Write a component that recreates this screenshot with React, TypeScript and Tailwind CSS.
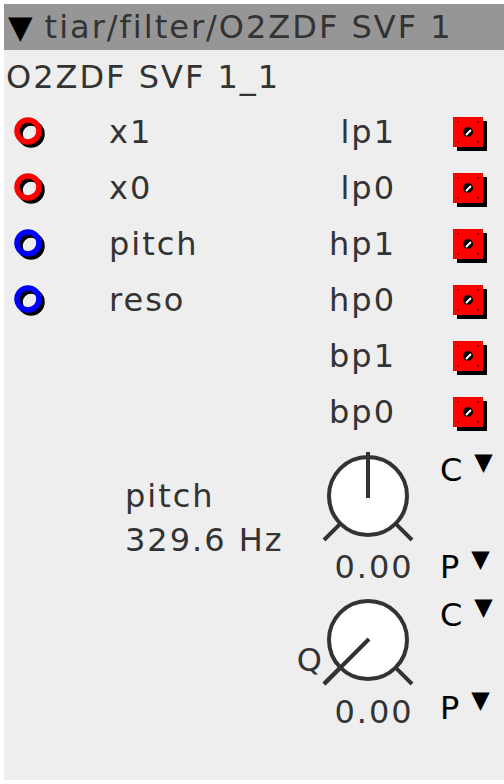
const inputs = [
  { name: 'x1', color: '#ff0000' },
  { name: 'x0', color: '#ff0000' },
  { name: 'pitch', color: '#0000ff' },
  { name: 'reso', color: '#0000ff' },
];

const outputs = ['lp1', 'lp0', 'hp1', 'hp0', 'bp1', 'bp0'];

function InPort({ color }: { color: string }) {
  return (
    <svg width="105" height="56" className="shrink-0">
      <circle cx="27" cy="30" r="11" fill="none" stroke="#000" strokeWidth="5.5" />
      <circle cx="24" cy="27" r="11" fill="none" stroke={color} strokeWidth="5.5" />
    </svg>
  );
}

function OutPort() {
  return (
    <svg width="108" height="56" className="shrink-0">
      <rect x="61" y="17" width="30" height="30" fill="#000" />
      <rect x="57" y="13" width="30" height="30" fill="#ff0000" />
      <rect x="61" y="17" width="1.5" height="1.5" fill="#000" />
      <rect x="81" y="17" width="1.5" height="1.5" fill="#000" />
      <rect x="61" y="37" width="1.5" height="1.5" fill="#000" />
      <rect x="81" y="37" width="1.5" height="1.5" fill="#000" />
      <circle cx="72" cy="28" r="5" fill="#000" />
      <path d="M70 31 L75 26" stroke="#fff" strokeWidth="2" />
    </svg>
  );
}

function Knob({ angle }: { angle: 'up' | 'min' }) {
  return (
    <svg width="100" height="100" className="block">
      <circle cx="50" cy="50" r="39" fill="#fff" stroke="#333" strokeWidth="4" />
      <path d="M22.4 77.6 L6 94" stroke="#333" strokeWidth="4" />
      <path d="M77.6 77.6 L94 94" stroke="#333" strokeWidth="4" />
      {angle === 'up' ? (
        <path d="M50 6 L50 52" stroke="#333" strokeWidth="4" />
      ) : (
        <path d="M51 49 L6 94" stroke="#333" strokeWidth="4" />
      )}
    </svg>
  );
}

function Drop({ letter }: { letter: string }) {
  return (
    <div className="flex items-center text-black">
      <span>{letter}</span>
      <span className="ml-[10px] text-[24px] leading-none -mt-[16px]">▼</span>
    </div>
  );
}

export default function App() {
  return (
    <div className="min-h-screen bg-white pl-1 pt-1 font-['DejaVu_Sans',sans-serif] text-[32px] tracking-[2px] text-[#333333]">
      <div className="w-[500px] h-[776px] bg-[#eeeeee] flex flex-col">
        {/* title bar */}
        <div className="h-[46px] bg-[#969696] flex items-center pl-[4px] whitespace-nowrap">
          <span className="text-black">▼</span>
          <span className="ml-[10px]">tiar/filter/O2ZDF SVF 1</span>
        </div>
        <div className="h-[54px] flex items-center pl-[2px] whitespace-nowrap">O2ZDF SVF 1_1</div>

        {/* ports */}
        <div className="flex">
          <div className="w-[260px] flex flex-col">
            {inputs.map((p) => (
              <div key={p.name} className="h-[56px] flex items-center">
                <InPort color={p.color} />
                <span>{p.name}</span>
              </div>
            ))}
          </div>
          <div className="flex-1 flex flex-col">
            {outputs.map((o) => (
              <div key={o} className="h-[56px] flex items-center justify-end">
                <span>{o}</span>
                <OutPort />
              </div>
            ))}
          </div>
        </div>

        {/* pitch knob */}
        <div className="flex h-[150px]">
          <div className="w-[314px] pl-[121px] pt-[34px] leading-[44px]">
            <div>pitch</div>
            <div>329.6 Hz</div>
          </div>
          <div className="w-[100px] pt-[6px] flex flex-col">
            <Knob angle="up" />
            <div className="leading-[42px] text-center pl-[12px]">0.00</div>
          </div>
          <div className="pl-[22px] pt-[6px] leading-[48px] flex flex-col">
            <Drop letter="C" />
            <div className="mt-[49px]">
              <Drop letter="P" />
            </div>
          </div>
        </div>

        {/* Q knob */}
        <div className="flex">
          <div className="w-[314px] flex justify-end pt-[50px] leading-[40px]">
            <span className="-mr-[6px] relative">Q</span>
          </div>
          <div className="w-[100px] flex flex-col">
            <Knob angle="min" />
            <div className="leading-[44px] text-center pl-[12px]">0.00</div>
          </div>
          <div className="pl-[22px] pt-[1px] leading-[48px] flex flex-col">
            <Drop letter="C" />
            <div className="mt-[45px]">
              <Drop letter="P" />
            </div>
          </div>
        </div>
      </div>
    </div>
  );
}
